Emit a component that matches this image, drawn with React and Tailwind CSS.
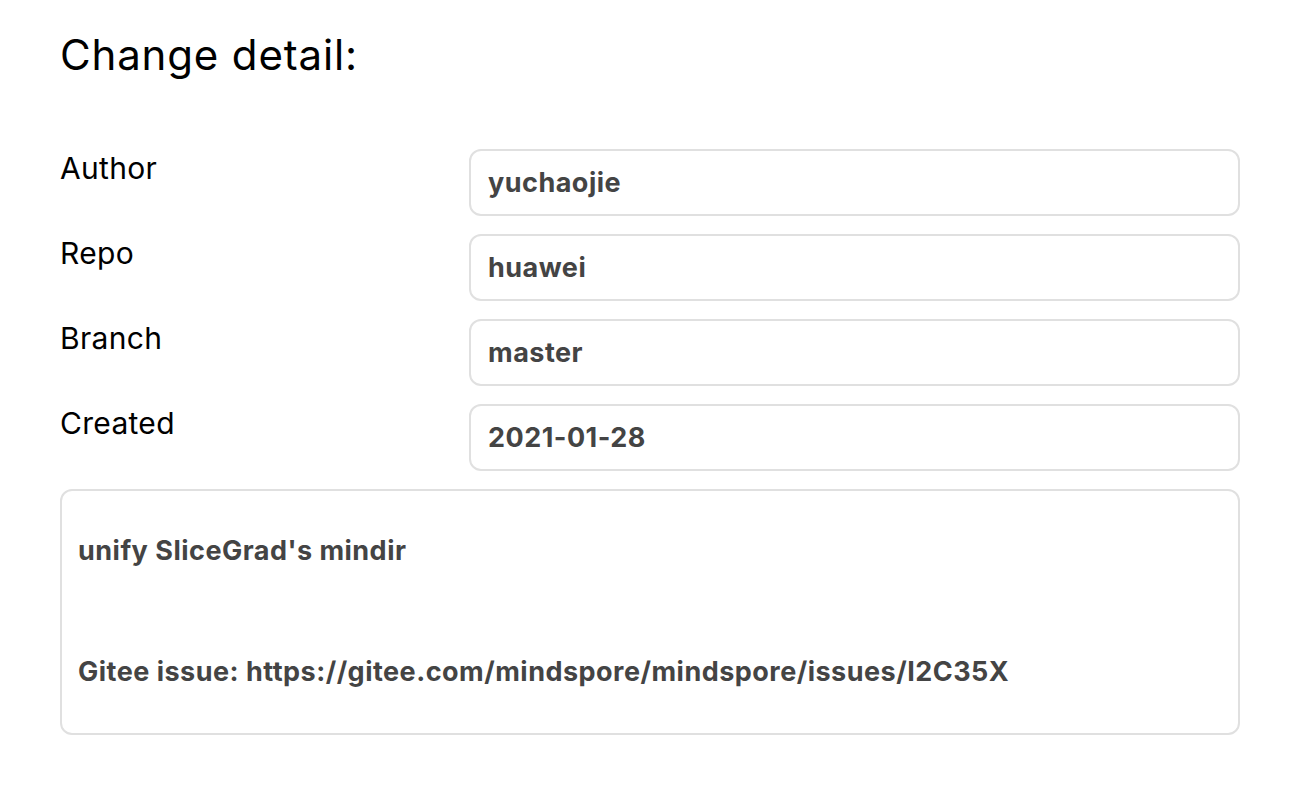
const fields = [
  { label: 'Author', value: 'yuchaojie' },
  { label: 'Repo', value: 'huawei' },
  { label: 'Branch', value: 'master' },
  { label: 'Created', value: '2021-01-28' },
];

export default function App() {
  return (
    <div className="min-h-screen bg-white px-[60px] pt-[27px] font-['Inter',sans-serif]">
      <h1 className="text-[42px] leading-[56px] tracking-[0.02em] text-black">Change detail:</h1>

      <div className="mt-[66px] flex flex-col gap-[18px]">
        {fields.map((f) => (
          <div key={f.label} className="flex items-start">
            <div className="w-[409px] text-[30px] leading-[38px] tracking-[0.01em] text-black">{f.label}</div>
            <div className="flex h-[67px] flex-1 items-center rounded-[12px] border-2 border-[#e0e0e0] px-[17px] pt-[2px] text-[27px] font-bold tracking-[0.018em] text-[#444]">
              {f.value}
            </div>
          </div>
        ))}
      </div>

      <div className="mt-[18px] h-[246px] rounded-[12px] border-2 border-[#e0e0e0] px-[16px] pt-[40px] text-[27px] font-bold leading-[40px] tracking-[0.018em] text-[#444]">
        <p>unify SliceGrad's mindir</p>
        <p className="mt-[81px]">Gitee issue: https://gitee.com/mindspore/mindspore/issues/I2C35X</p>
      </div>
    </div>
  );
}
